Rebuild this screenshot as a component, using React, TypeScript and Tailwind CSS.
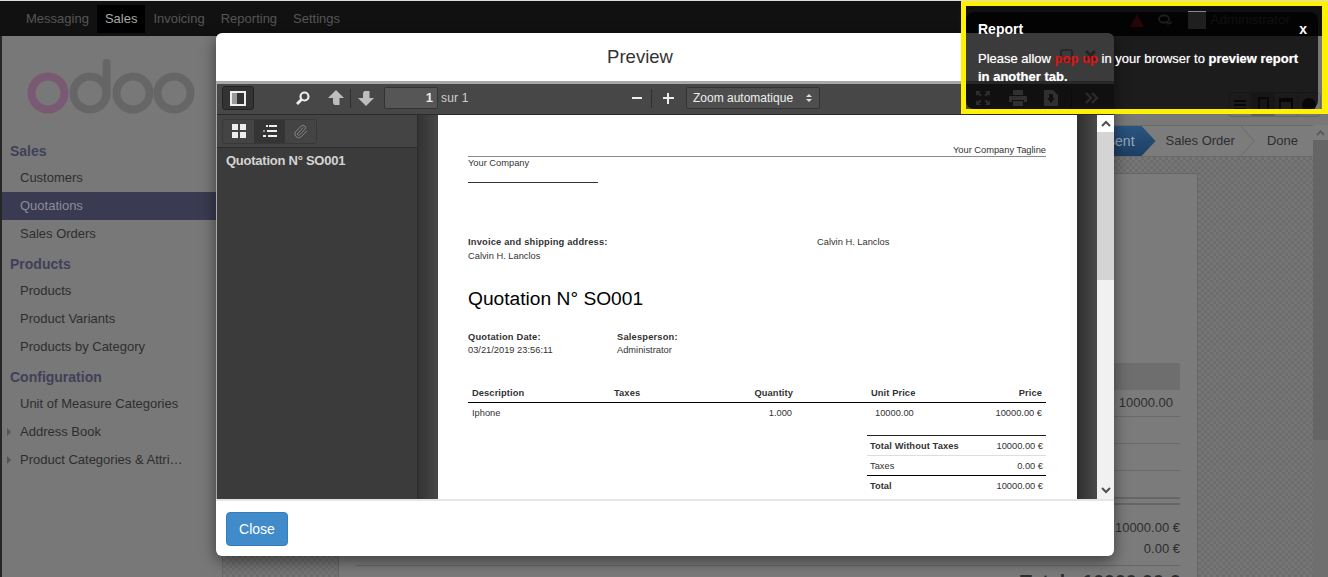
import React from "react";
import { Paperclip } from "lucide-react";

const font = "font-['Liberation_Sans',Arial,sans-serif]";

function MenuItem({ label, active, caret }: { label: string; active?: boolean; caret?: boolean }) {
  return (
    <div className={`relative flex h-[28px] items-center pl-[18px] text-[13px] ${active ? "bg-[#3a3a52] text-[#8d8d98]" : "text-[#2e2e2e]"}`}>
      {caret && <span className="absolute left-[5px] top-[10px] h-0 w-0 border-y-[4px] border-l-[4px] border-y-transparent border-l-[#555]" />}
      <span>{label}</span>
    </div>
  );
}

function SectionTitle({ label, className = "" }: { label: string; className?: string }) {
  return <div className={`flex h-[26px] items-center pl-[8px] text-[14px] font-bold text-[#404058] ${className}`}>{label}</div>;
}

function Logo() {
  return (
    <svg width="200" height="70" viewBox="0 0 200 70" fill="none">
      <circle cx="28" cy="37" r="16.5" stroke="#7a5a72" strokeWidth="8" />
      <circle cx="70" cy="37" r="16.5" stroke="#666" strokeWidth="8" />
      <path d="M86.5 37V7" stroke="#666" strokeWidth="8" strokeLinecap="round" />
      <circle cx="113" cy="37" r="16.5" stroke="#666" strokeWidth="8" />
      <circle cx="154" cy="37" r="16.5" stroke="#666" strokeWidth="8" />
    </svg>
  );
}

function SheetRow({ h, right, line = true, cls = "" }: { h: number; right?: string; line?: boolean; cls?: string }) {
  return (
    <div className={`flex items-center justify-end text-[13px] text-[#2e2e2e] ${line ? "border-b border-[#6a6a6a]" : ""} ${cls}`} style={{ height: h }}>
      {right}
    </div>
  );
}

function ViewButtons() {
  return (
    <div className="flex h-[25px] w-[93px] rounded-[4px] border border-[#666] bg-[#757575]">
      <div className="flex flex-1 flex-col items-center justify-center gap-[2px] border-r border-[#666]">
        <span className="h-[2px] w-[12px] bg-[#222]" /><span className="h-[2px] w-[12px] bg-[#222]" /><span className="h-[2px] w-[12px] bg-[#222]" />
      </div>
      <div className="flex flex-1 items-center justify-center border-r border-[#666] bg-[#606060]"><span className="h-[16px] w-[11px] border-2 border-[#222]" /></div>
      <div className="flex flex-1 items-center justify-center border-r border-[#666]"><span className="h-[13px] w-[14px] border-2 border-t-4 border-[#222]" /></div>
      <div className="flex flex-1 items-center justify-center"><span className="h-[14px] w-[14px] rounded-full bg-[#222]" /></div>
    </div>
  );
}

function Background() {
  return (
    <div className="flex h-full flex-col bg-[#787878]">
      <div className="h-px bg-[#dddddd]" />
      <header className="flex h-[35px] items-start bg-[#111111] pl-[18px] pr-[38px] text-[13px] text-[#565656]">
        <div className="mt-[4px] flex h-[28px] items-center px-[8px]">Messaging</div>
        <div className="mt-[4px] flex h-[28px] items-center bg-black px-[8px] text-[#a8a8a8]">Sales</div>
        <div className="mt-[4px] flex h-[28px] items-center px-[8px]">Invoicing</div>
        <div className="mt-[4px] flex h-[28px] items-center px-[8px]">Reporting</div>
        <div className="mt-[4px] flex h-[28px] items-center px-[8px]">Settings</div>
        <div className="ml-auto mt-[9px] flex items-center text-[13.5px] text-[#444444]">
          <svg width="14" height="13" viewBox="0 0 14 13" className="mr-[14px]"><path d="M7 0 14 13H0Z" fill="#a01818" /></svg>
          <svg width="14" height="12" viewBox="0 0 14 12" className="mr-[16px]" fill="none" stroke="#8a8a8a" strokeWidth="1.6"><ellipse cx="6" cy="5" rx="5" ry="3.6" /><path d="M9 9.5c2 .5 4-.5 4-2" /></svg>
          <span className="mr-[4px] h-[18px] w-[18px] bg-[#888]" />
          <span>Administrator</span>
        </div>
      </header>
      <div className="flex min-h-0 flex-1">
        <div className="w-[2px] bg-[#262626]" />
        <aside className="w-[220px] shrink-0">
          <div className="h-[102px] pl-[18px] pt-[20px]"><Logo /></div>
          <SectionTitle label="Sales" />
          <MenuItem label="Customers" />
          <MenuItem label="Quotations" active />
          <MenuItem label="Sales Orders" />
          <SectionTitle label="Products" className="mt-[3px]" />
          <MenuItem label="Products" />
          <MenuItem label="Product Variants" />
          <MenuItem label="Products by Category" />
          <SectionTitle label="Configuration" className="mt-[3px]" />
          <MenuItem label="Unit of Measure Categories" />
          <MenuItem label="Address Book" caret />
          <MenuItem label="Product Categories & Attri…" caret />
        </aside>
        <main className="flex min-w-0 flex-1 flex-col border-l border-[#666]">
          <div className="flex h-[89px] shrink-0 items-end justify-end pb-[8px] pr-[7px]"><ViewButtons /></div>
          <div className="flex min-h-0 flex-1">
            <div className="flex min-w-0 flex-1 flex-col">
              <div className="flex h-[32px] shrink-0 items-center justify-end border-y border-[#6a6a6a] bg-[#7c7c7c] text-[13px] text-[#2e2e2e]">
                <span className="flex h-full items-center bg-[linear-gradient(#2a5580,#1d3e63)] pl-[10px] pr-[21px] text-[14px] text-[#9ab] [clip-path:polygon(0_0,calc(100%-14px)_0,100%_50%,calc(100%-14px)_100%,0_100%)]">Sent</span>
                <span className="pl-[10px]">Sales Order</span>
                <svg width="14" height="30" viewBox="0 0 14 30" fill="none" stroke="#6a6a6a" className="ml-[6px] mr-[12px]"><path d="M0 0l13 15L0 30" /></svg>
                <span className="pr-[15px]">Done</span>
              </div>
              <div className="min-h-0 flex-1 bg-[repeating-conic-gradient(#767676_0_25%,#6d6d6d_0_50%)] bg-[length:6px_6px] pl-[115px] pr-[115px] pt-[16px]">
                <div className="h-[500px] border border-[#666] bg-[#7b7b7b] px-[17px] pt-[189px]">
                  <SheetRow h={27} line={false} cls="bg-[#6e6e6e]" />
                  <SheetRow h={27} right="10000.00" cls="pr-[7px]" />
                  <SheetRow h={27} />
                  <SheetRow h={27} />
                  <div className="h-[26px]" />
                  <div className="h-[8px] border-y-[2px] border-[#666]" />
                  <SheetRow h={32} right="10000.00 €" line={false} cls="items-end" />
                  <SheetRow h={23} right="0.00 €" line={false} />
                  <div className="mt-[5px] border-t border-[#666] pt-[6px] text-right text-[19.5px] font-bold leading-[20px] text-[#2e2e2e]">Total : 10000.00 €</div>
                </div>
              </div>
            </div>
            <div className="w-[15px] shrink-0 bg-[#6f6f6f]">
              <div className="flex h-[15px] items-center justify-center bg-[#7d7d7d]"><svg width="9" height="6" viewBox="0 0 9 6"><path d="M1 5l3.5-3.5L8 5" fill="none" stroke="#5a5a5a" strokeWidth="2" /></svg></div>
              <div className="h-[300px] bg-[#656565]" />
            </div>
          </div>
        </main>
      </div>
    </div>
  );
}

const toolBtn = "flex items-center justify-center";

function ToolIcons() {
  return (
    <div className="ml-auto flex items-center pr-[14px]">
      <svg width="16" height="16" viewBox="0 0 16 16" fill="#c8c8c8" className="mr-[18px]">
        <path d="M1 1h5L4.3 2.700 6.500 5 5 6.500 2.700 4.300 1 6zM15 1v5l-1.700-1.700L11 6.500 9.500 5l2.200-2.300L10 1zM1 15v-5l1.700 1.700L5 9.500 6.500 11l-2.200 2.300L6 15zM15 15h-5l1.700-1.700L9.500 11 11 9.500l2.300 2.200L15 10z" />
      </svg>
      <svg width="18" height="16" viewBox="0 0 18 16" fill="#d0d0d0" className="mr-[17px]">
        <path d="M4 0h10v5H4zM1 6h16a1 1 0 0 1 1 1v5h-3v-2H3v2H0V7a1 1 0 0 1 1-1zM4 11h10v5H4z" />
      </svg>
      <svg width="14" height="16" viewBox="0 0 14 16" fill="#d0d0d0" className="mr-[13px]">
        <path fillRule="evenodd" d="M0 0h9l5 5v11H0zM5 4v4H3l4 5 4-5H9V4z" />
      </svg>
      <span className="mr-[13px] h-[19px] w-px bg-[#333]" />
      <svg width="14" height="12" viewBox="0 0 14 12" fill="none" stroke="#b8b8b8" strokeWidth="2.400" className="mr-[1px]">
        <path d="M1 1l5 5-5 5M7 1l5 5-5 5" />
      </svg>
    </div>
  );
}

function DocPage() {
  return (
    <div className="h-full w-[639px] shrink-0 overflow-hidden bg-white pl-[30px] pr-[31px] pt-[29px] text-[9.3px] leading-[12px] text-[#333]">
      <div className="h-[12px] text-right">Your Company Tagline</div>
      <div className="h-px bg-[#8a8a8a]" />
      <div className="h-[25px]">Your Company</div>
      <div className="h-px w-[130px] bg-[#333]" />
      <div className="mt-[53px] flex">
        <div className="w-[349px]">
          <div className="font-bold tracking-[0.2px]">Invoice and shipping address:</div>
          <div className="mt-[2px]">Calvin H. Lanclos</div>
        </div>
        <div>Calvin H. Lanclos</div>
      </div>
      <div className="mt-[23px] text-[19.2px] leading-[28px] text-black">Quotation N° SO001</div>
      <div className="mt-[18px] flex">
        <div className="w-[149px]">
          <div className="font-bold tracking-[0.2px]">Quotation Date:</div>
          <div className="mt-[1px]">03/21/2019 23:56:11</div>
        </div>
        <div>
          <div className="font-bold tracking-[0.2px]">Salesperson:</div>
          <div className="mt-[1px]">Administrator</div>
        </div>
      </div>
      <div className="mt-[27px] flex h-[20px] items-center border-b border-black px-[4px] font-bold tracking-[0.1px]">
        <span className="w-[142px]">Description</span>
        <span className="w-[80px]">Taxes</span>
        <span className="w-[99px] text-right">Quantity</span>
        <span className="ml-[78px]">Unit Price</span>
        <span className="ml-auto">Price</span>
      </div>
      <div className="flex h-[20px] items-center px-[4px]">
        <span className="w-[221px]">Iphone</span>
        <span className="w-[99px] text-right">1.000</span>
        <span className="ml-[83px]">10000.00</span>
        <span className="ml-auto">10000.00 €</span>
      </div>
      <div className="ml-[399px] mt-[12px] border-t border-[#222]">
        <div className="flex h-[20px] items-center border-b border-[#ddd] px-[3px]">
          <span className="font-bold tracking-[0.1px]">Total Without Taxes</span><span className="ml-auto">10000.00 €</span>
        </div>
        <div className="flex h-[20px] items-center border-b border-black px-[3px]">
          <span>Taxes</span><span className="ml-auto">0.00 €</span>
        </div>
        <div className="flex h-[20px] items-center px-[3px]">
          <span className="font-bold">Total</span><span className="ml-auto">10000.00 €</span>
        </div>
      </div>
    </div>
  );
}

function Modal() {
  return (
    <div className="absolute left-[216px] top-[33px] flex h-[523px] w-[898px] flex-col overflow-hidden rounded-[6px] bg-white shadow-[0_5px_15px_rgba(0,0,0,0.5)]">
      <div className="relative flex h-[48px] shrink-0 items-center justify-center pr-[50px] text-[18.500px] text-[#333]">
        Preview
        <span className="absolute left-[844px] top-[16px] h-[13px] w-[13px] rounded-[3px] border-2 border-[#aaa]" />
        <svg width="11" height="11" viewBox="0 0 11 11" className="absolute left-[869px] top-[17px]" stroke="#999" strokeWidth="3"><path d="M1 1l9 9M10 1l-9 9" /></svg>
      </div>
      <div className="flex min-h-0 flex-1 flex-col border-l border-[#aaa] bg-[#3a3a3a]">
        <div className="h-[3px] shrink-0 bg-[#a8a8a8]" />
        <div className="flex h-[31px] shrink-0 items-center border-b border-[#2a2a2a] bg-[#474747] pb-[2px] pl-[5px] text-[13px] text-[#d8d8d8]">
          <div className={`${toolBtn} h-[24px] w-[32px] rounded-[3px] border border-[#222] bg-[#333]`}>
            <svg width="16" height="15" viewBox="0 0 16 15" fill="none"><rect x="1" y="1" width="14" height="13" stroke="#eee" strokeWidth="2" /><rect x="2" y="2" width="5" height="11" fill="#999" /></svg>
          </div>
          <svg width="14" height="14" viewBox="0 0 14 14" fill="none" stroke="#eee" strokeWidth="2.200" className="ml-[42px]"><circle cx="8.500" cy="5.500" r="4" /><path d="M5.500 8.500 1 13" strokeWidth="2.800" /></svg>
          <svg width="16" height="16" viewBox="0 0 16 16" fill="#bdbdbd" className="ml-[18px]"><path d="M8 0l8 8h-4.500v7H7c-1 0-2-1-2-3V8H0z" /></svg>
          <span className="ml-[6px] h-[19px] w-px bg-[#2f2f2f]" />
          <svg width="16" height="16" viewBox="0 0 16 16" fill="#bdbdbd" className="ml-[7px]"><path d="M8 16l8-8h-4.500V1H7C6 1 5 2 5 4v4H0z" /></svg>
          <div className="ml-[10px] flex h-[22px] w-[54px] items-center justify-end rounded-[2px] border border-[#333] bg-[#565656] pr-[4px] font-bold text-[#e8e8e8]">1</div>
          <span className="ml-[3px] w-[191px] text-[12px] tracking-[0.2px] text-[#d0d0d0]">sur 1</span>
          <span className="h-[2px] w-[10px] bg-[#eee]" />
          <span className="ml-[9px] mr-[11px] h-[19px] w-px bg-[#2f2f2f]" />
          <span className="relative h-[11px] w-[11px] shrink-0">
            <span className="absolute left-0 top-[4px] h-[2px] w-[11px] bg-[#eee]" />
            <span className="absolute left-[4px] top-0 h-[11px] w-[2px] bg-[#eee]" />
          </span>
          <div className="ml-[12px] flex h-[22px] w-[134px] items-center justify-between rounded-[2px] border border-[#333] bg-[#4e4e4e] pl-[6px] pr-[7px] text-[12px] text-[#eeeeee]">
            <span>Zoom automatique</span>
            <span className="flex flex-col gap-[2px]">
              <span className="h-0 w-0 border-x-[3px] border-b-[3px] border-x-transparent border-b-[#ddd]" />
              <span className="h-0 w-0 border-x-[3px] border-t-[3px] border-x-transparent border-t-[#ddd]" />
            </span>
          </div>
          <ToolIcons />
        </div>
        <div className="flex min-h-0 flex-1">
          <div className="w-[201px] shrink-0 border-r border-[#2c2c2c] bg-[#3b3b3b]">
            <div className="flex h-[33px] items-center border-b border-[#2c2c2c] bg-[#444] pl-[5px]">
              <div className="flex h-[25px] rounded-[3px] border border-[#383838]">
                <div className={`${toolBtn} w-[31px]`}>
                  <svg width="14" height="14" viewBox="0 0 14 14" fill="#eee"><rect width="6" height="6" /><rect x="8" width="6" height="6" /><rect y="8" width="6" height="6" /><rect x="8" y="8" width="6" height="6" /></svg>
                </div>
                <div className={`${toolBtn} w-[31px] bg-[#343434]`}>
                  <svg width="14" height="13" viewBox="0 0 14 13" fill="#eee"><rect x="3" width="2" height="2" /><rect x="6" width="8" height="2" /><rect x="0" y="5" width="2" height="2" opacity="0.500" /><rect x="4" y="5" width="10" height="2" /><rect x="0" y="10" width="3" height="2" /><rect x="5" y="10" width="9" height="2" /></svg>
                </div>
                <div className={`${toolBtn} w-[31px]`}>
                  <Paperclip size={15} color="#8a8a8a" strokeWidth={1.500} />
                </div>
              </div>
            </div>
            <div className="pl-[9px] pt-[4px] text-[13px] font-bold leading-[18px] tracking-[-0.25px] text-[#d4d4d4]">Quotation N° SO001</div>
          </div>
          <div className="flex min-w-0 flex-1">
            <div className="w-[20px] shrink-0 bg-[linear-gradient(90deg,#333,#474747)]" />
            <DocPage />
            <div className="w-[20px] shrink-0 bg-[linear-gradient(90deg,#2f2f2f,#4a4a4a)]" />
          </div>
          <div className="flex w-[17px] shrink-0 flex-col bg-[#f1f1f1]">
            <div className="flex h-[17px] items-center justify-center bg-white"><svg width="10" height="7" viewBox="0 0 10 7"><path d="M1 6l4-4 4 4" fill="none" stroke="#505050" strokeWidth="2" /></svg></div>
            <div className="h-[148px] bg-[#d4d4d4]" />
            <div className="mt-auto flex h-[17px] items-center justify-center"><svg width="10" height="7" viewBox="0 0 10 7"><path d="M1 1l4 4 4-4" fill="none" stroke="#505050" strokeWidth="2" /></svg></div>
          </div>
        </div>
      </div>
      <div className="h-[57px] shrink-0 border-t-2 border-[#e5e5e5] pl-[10px] pt-[11px]">
        <button className="flex h-[34px] w-[62px] items-center justify-center rounded-[4px] border border-[#357ebd] bg-[#428bca] text-[14px] text-white">Close</button>
      </div>
    </div>
  );
}

function Notification() {
  return (
    <div className="absolute left-[961px] top-[1px] h-[113px] w-[367px] border-y-[5px] border-l-[5px] border-r-[6px] border-[#fff200]">
      <div className="mr-[4px] mt-[6px] h-[97px] rounded-[8px] bg-[rgba(0,0,0,0.77)] pl-[12px] pr-[11px] pt-[6px] text-white">
        <div className="flex h-[22px] items-center justify-between text-[14px] font-bold">
          <span>Report</span>
          <span>x</span>
        </div>
        <p className="mt-[10px] text-[13px] leading-[17.5px] [text-shadow:0_0_1px_rgba(255,255,255,0.6)]">
          Please allow <span className="font-bold text-[#e61010] [text-shadow:none]">pop up</span> in your browser to <b>preview report</b> <b>in another tab.</b>
        </p>
      </div>
    </div>
  );
}

export default function App() {
  return (
    <div className={`relative h-[577px] w-[1328px] overflow-hidden ${font}`}>
      <Background />
      <Modal />
      <Notification />
    </div>
  );
}
